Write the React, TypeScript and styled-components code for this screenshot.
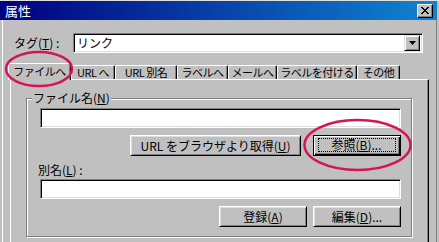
import React from "react";
import styled, { createGlobalStyle } from "styled-components";

/* Win classic palette */
const FACE = "#c0c0c0";
const SHADOW = "#808080";
const LIGHT = "#dfdfdf";
const MARK = "#d4145a";

const GlobalStyle = createGlobalStyle`
    html, body {
        margin: 0;
        padding: 0;
        background: ${FACE};
    }
    body {
        font-family: "Noto Sans CJK JP", "Liberation Sans", sans-serif;
        font-size: 12px;
        color: #000;
    }
`;

/* Window frame */
const Window = styled.div`
    position: relative;
    width: 439px;
    height: 242px;
    overflow: hidden;
    background: ${FACE};
    border-top: 1px solid ${LIGHT};
    box-sizing: border-box;
`;

const TitleBar = styled.div`
    display: flex;
    align-items: center;
    width: 437px;
    height: 19px;
    padding: 0 4px 0 5px;
    box-sizing: border-box;
    background: linear-gradient(to right, #000080, #1084d0);
`;

const TitleText = styled.span`
    flex: 1;
    color: #fff;
    font-size: 13px;
    line-height: 14px;
`;

const CloseButton = styled.div`
    display: flex;
    align-items: center;
    justify-content: center;
    width: 16px;
    height: 14px;
    box-sizing: border-box;
    background: ${FACE};
    border: 1px solid;
    border-color: #fff #000 #000 #fff;
    box-shadow: inset -1px -1px 0 ${SHADOW};
`;

const Client = styled.div`
    width: 435px;
    height: 230px;
    margin-left: 2px;
    padding-top: 13px;
    box-sizing: border-box;
    border-left: 1px solid #fff;
    border-right: 1px solid ${SHADOW};
`;

/* Tag row */
const TagRow = styled.div`
    display: flex;
    align-items: center;
    padding-left: 11px;
`;

const FieldLabel = styled.span<{ $width?: number }>`
    width: ${({ $width }) => ($width ? `${$width}px` : "auto")};
    line-height: 14px;
    white-space: nowrap;
`;

const Combo = styled.div`
    display: flex;
    align-items: center;
    width: 350px;
    height: 20px;
    box-sizing: border-box;
    background: #fff;
    border: 1px solid;
    border-color: ${SHADOW} #fff #fff ${SHADOW};
    box-shadow: inset 1px 1px 0 #000, inset -1px -1px 0 ${LIGHT};
    padding: 0 2px 0 2px;
`;

const ComboText = styled.span`
    flex: 1;
    padding-left: 1px;
    line-height: 14px;
`;

const DropButton = styled.div`
    display: flex;
    align-items: center;
    justify-content: center;
    width: 16px;
    height: 16px;
    box-sizing: border-box;
    background: ${FACE};
    border: 1px solid;
    border-color: ${LIGHT} #000 #000 ${LIGHT};
    box-shadow: inset 1px 1px 0 #fff, inset -1px -1px 0 ${SHADOW};
`;

/* Tabs */
const TabArea = styled.div`
    width: 419px;
    margin: 10px 0 0 7px;
`;

const TabStrip = styled.div`
    display: flex;
    align-items: flex-end;
    height: 16px;
    margin-left: -2px;
`;

const Tab = styled.div<{ $width: number; $active?: boolean }>`
    position: relative;
    z-index: ${({ $active }) => ($active ? 2 : 1)};
    flex: none;
    width: ${({ $width }) => $width}px;
    height: ${({ $active }) => ($active ? 17 : 14)}px;
    margin-bottom: ${({ $active }) => ($active ? -1 : 0)}px;
    padding-top: ${({ $active }) => ($active ? 1 : 0)}px;
    box-sizing: border-box;
    background: ${FACE};
    border: 1px solid;
    border-bottom: none;
    border-color: #fff #000 transparent #fff;
    border-radius: 2px 2px 0 0;
    box-shadow: inset -1px 0 0 ${SHADOW};
    text-align: center;
    font-size: 11px;
    letter-spacing: -0.5px;
    line-height: 12px;
    white-space: nowrap;
    overflow: hidden;
`;

const TabPanel = styled.div`
    height: 200px;
    box-sizing: border-box;
    border-top: 1px solid #fff;
    border-left: 1px solid #fff;
    border-right: 1px solid #000;
    box-shadow: inset -1px 0 0 ${SHADOW};
    padding: 18px 0 0 15px;
`;

/* Etched group box */
const GroupBox = styled.div`
    position: relative;
    width: 386px;
    height: 139px;
    box-sizing: border-box;
    border: 1px solid ${SHADOW};
    box-shadow: inset 1px 1px 0 #fff, 1px 1px 0 #fff;
    padding: 9px 10px 0 13px;
    display: flex;
    flex-direction: column;
`;

const Legend = styled.span`
    position: absolute;
    top: -7px;
    left: 5px;
    padding: 0 1px;
    background: ${FACE};
    line-height: 12px;
`;

const TextBox = styled.div`
    width: 361px;
    height: 20px;
    box-sizing: border-box;
    background: #fff;
    border: 1px solid;
    border-color: ${SHADOW} #fff #fff ${SHADOW};
    box-shadow: inset 1px 1px 0 #000, inset -1px -1px 0 ${LIGHT};
`;

const ButtonRow = styled.div<{ $gap: number }>`
    display: flex;
    justify-content: flex-end;
    gap: ${({ $gap }) => $gap}px;
    margin-top: 7px;
`;

const PushButton = styled.div<{ $width: number; $default?: boolean }>`
    display: flex;
    align-items: center;
    justify-content: center;
    width: ${({ $width }) => $width}px;
    height: 21px;
    box-sizing: border-box;
    background: ${FACE};
    white-space: nowrap;
    line-height: 12px;
    border: 1px solid;
    border-color: ${({ $default }) => ($default ? "#000" : "#fff #000 #000 #fff")};
    box-shadow: ${({ $default }) =>
        $default
            ? `inset 1px 1px 0 #fff, inset -1px -1px 0 #000, inset -2px -2px 0 ${SHADOW}`
            : `inset 1px 1px 0 ${LIGHT}, inset -1px -1px 0 ${SHADOW}`};
`;

const FocusRing = styled.span`
    display: flex;
    align-items: center;
    justify-content: center;
    width: 78px;
    height: 14px;
    box-sizing: border-box;
    border: 1px dotted #000;
    margin: -1px 0 0 -1px;
`;

const AliasLabel = styled(FieldLabel)`
    margin: 7px 0 2px -2px;
`;

/* red marker ellipses drawn over the shot */
const Marks = styled.svg`
    position: absolute;
    inset: 0;
    pointer-events: none;
    z-index: 5;
`;

const TABS = [
    { label: "ファイルへ", width: 63 },
    { label: "URL へ", width: 44 },
    { label: "URL 別名", width: 62 },
    { label: "ラベルへ", width: 51 },
    { label: "メールへ", width: 49 },
    { label: "ラベルを付ける", width: 80 },
    { label: "その他", width: 43 },
];

export default function App() {
    return (
        <>
            <GlobalStyle />
            <Window>
                <TitleBar>
                    <TitleText>属性</TitleText>
                    <CloseButton>
                        <svg width="8" height="7" viewBox="0 0 8 7">
                            <path d="M0 0 L7 7 M1 0 L8 7 M7 0 L0 7 M8 0 L1 7" stroke="#000" strokeWidth="1" />
                        </svg>
                    </CloseButton>
                </TitleBar>
                <Client>
                    <TagRow>
                        <FieldLabel $width={59}>
                            タグ(<u>T</u>) :
                        </FieldLabel>
                        <Combo>
                            <ComboText>リンク</ComboText>
                            <DropButton>
                                <svg width="7" height="4" viewBox="0 0 7 4">
                                    <path d="M0 0 H7 L3.5 4 Z" fill="#000" />
                                </svg>
                            </DropButton>
                        </Combo>
                    </TagRow>

                    <TabArea>
                        <TabStrip>
                            {TABS.map((t, i) => (
                                <Tab key={t.label} $width={t.width} $active={i === 0}>
                                    {t.label}
                                </Tab>
                            ))}
                        </TabStrip>
                        <TabPanel>
                            <GroupBox>
                                <Legend>
                                    ファイル名(<u>N</u>)
                                </Legend>
                                <TextBox />
                                <ButtonRow $gap={12}>
                                    <PushButton $width={171}>
                                        URL をブラウザより取得(<u>U</u>)
                                    </PushButton>
                                    <PushButton $width={88} $default>
                                        <FocusRing>
                                            参照(<u>B</u>)...
                                        </FocusRing>
                                    </PushButton>
                                </ButtonRow>
                                <AliasLabel>
                                    別名(<u>L</u>) :
                                </AliasLabel>
                                <TextBox />
                                <ButtonRow $gap={6}>
                                    <PushButton $width={88}>
                                        登録(<u>A</u>)
                                    </PushButton>
                                    <PushButton $width={88}>
                                        編集(<u>D</u>)...
                                    </PushButton>
                                </ButtonRow>
                            </GroupBox>
                        </TabPanel>
                    </TabArea>
                </Client>
                <Marks width="439" height="242" viewBox="0 0 439 242">
                    <ellipse cx="39" cy="68" rx="33" ry="17" fill="none" stroke={MARK} strokeWidth="2.5" />
                    <ellipse cx="357.5" cy="144" rx="53" ry="25" fill="none" stroke={MARK} strokeWidth="2.5" />
                </Marks>
            </Window>
        </>
    );
}
